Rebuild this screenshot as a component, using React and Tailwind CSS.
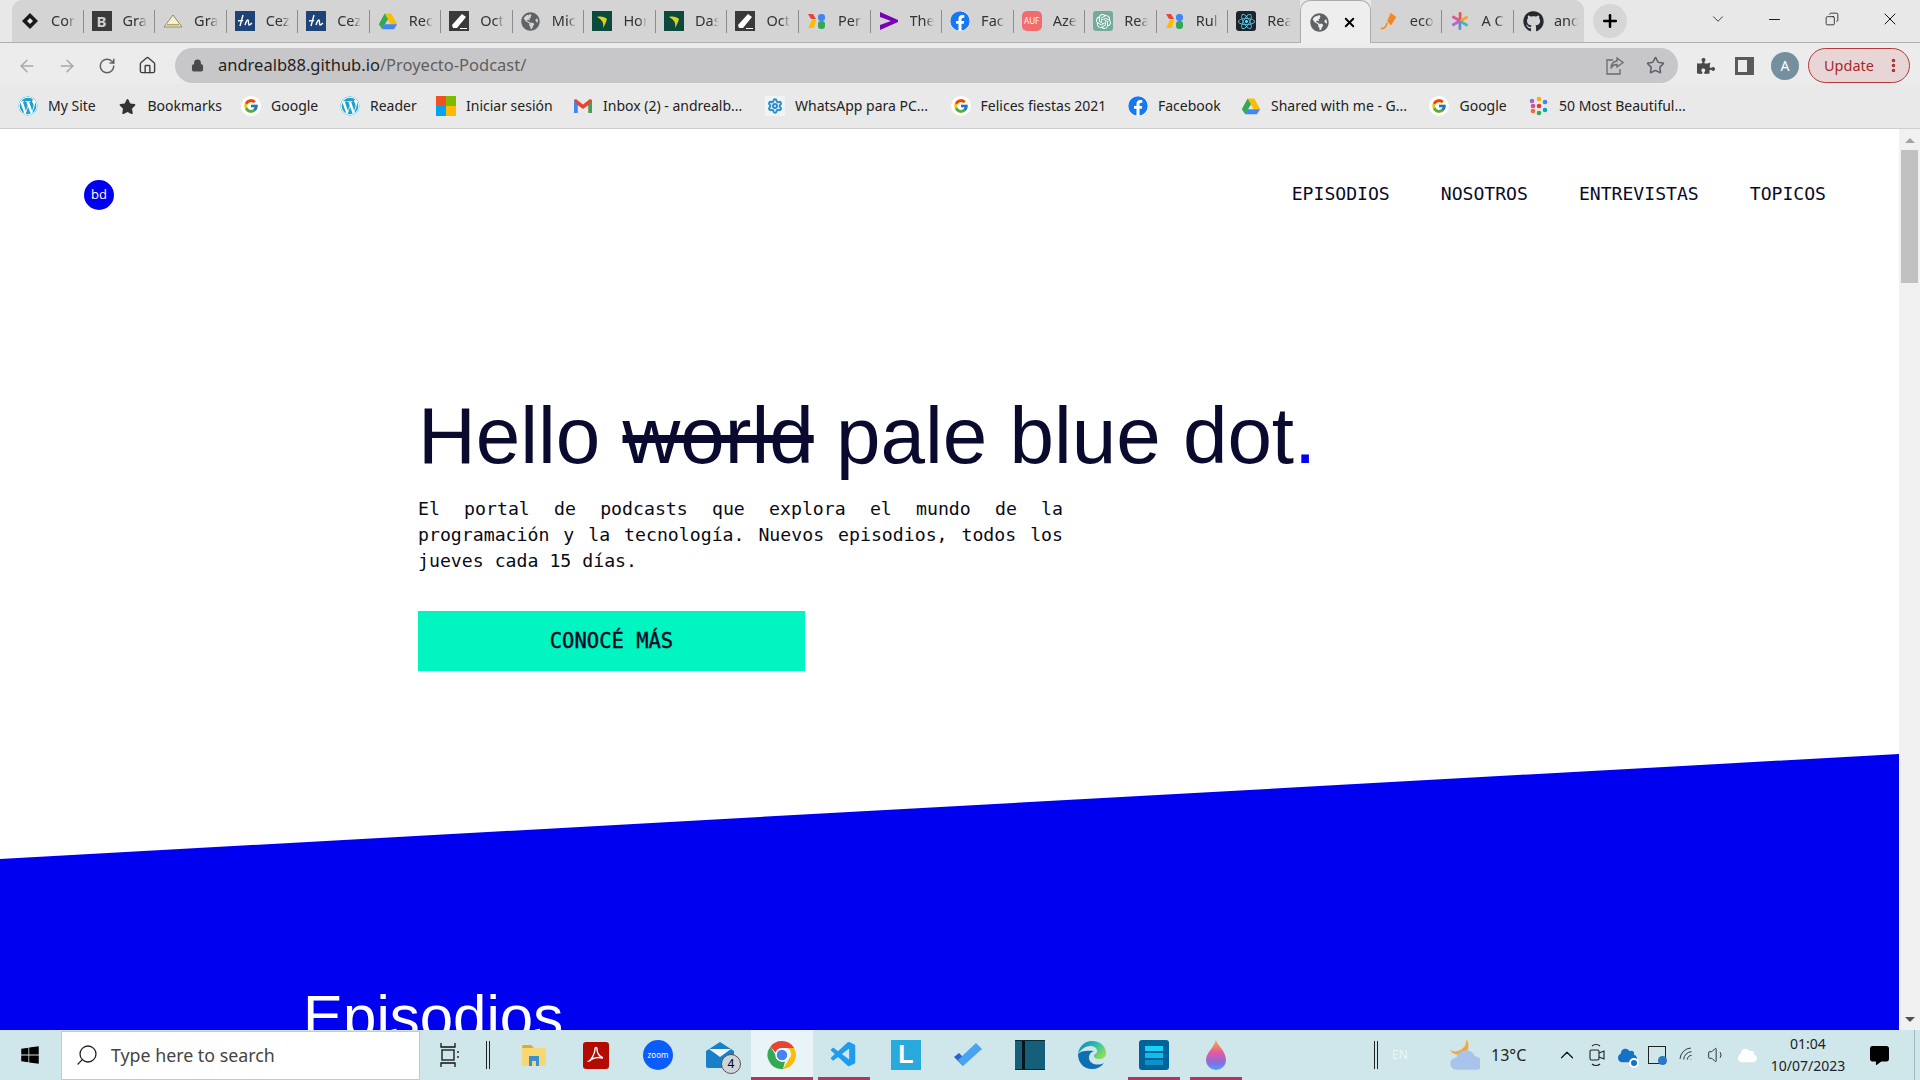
import { ArrowLeft, ArrowRight, RotateCw, Home, Lock, Star, Minus, X, Plus, ChevronDown, ChevronUp, Search, Wifi, Volume1, EllipsisVertical, Copy, Settings } from "lucide-react";
import { FaGithub, FaFacebook, FaReact, FaGlobeAmericas, FaWordpress, FaWindows, FaPuzzlePiece, FaStar, FaCloud, FaCommentAlt } from "react-icons/fa";
import { FcGoogle } from "react-icons/fc";
import { SiOpenai } from "react-icons/si";
import { VscVscode } from "react-icons/vsc";

const uiFont = "font-['Noto_Sans',sans-serif]";
const monoFont = "font-['DejaVu_Sans_Mono',monospace]";

function Drive({ size = 20 }) {
    return (
        <svg width={size} height={size} viewBox="0 0 24 24">
            <polygon points="8,3 16,3 23,16 15,16" fill="#fbbc04" />
            <polygon points="8,3 12,10 5,22 1,16" fill="#34a853" />
            <polygon points="8,16 23,16 19,22 5,22" fill="#4285f4" />
        </svg>
    );
}

function Tile({ className, children }) {
    return <div className={`flex h-5 w-5 items-center justify-center overflow-hidden ${className}`}>{children}</div>;
}

function Leaf() {
    return (
        <Tile className="bg-[#0b4a3c]">
            <svg width="16" height="16" viewBox="0 0 16 16">
                <path d="M3 4c4-1 8 0 10 2-1 3-2 6-4 9 1-4 0-8-6-11z" fill="#d9d21f" />
            </svg>
        </Tile>
    );
}

function Pencil() {
    return (
        <Tile className="bg-[#3a3a3a]">
            <svg width="20" height="20" viewBox="0 0 20 20">
                <path d="M13 3l4 3-9 11H4l-1-3z" fill="#fff" />
                <path d="M11 17h7v1h-7z" fill="#fff" />
            </svg>
        </Tile>
    );
}

function Blocks() {
    return (
        <svg width="20" height="20" viewBox="0 0 20 20">
            <polygon points="1,3 6,3 9,8 4,8" fill="#e8453c" />
            <polygon points="5,9 9,9 7,17 1,17" fill="#fbbc04" />
            <rect x="11" y="3" width="7" height="7" rx="3" fill="#4285f4" />
            <rect x="11" y="10" width="7" height="8" rx="3" fill="#34a853" />
        </svg>
    );
}

function Kite() {
    return (
        <svg width="22" height="22" viewBox="0 0 22 22">
            <path d="M13 2l6 5-6 9-4-5z" fill="#f6861f" />
            <path d="M9 13c-1 5-4 7-7 6" fill="none" stroke="#f6861f" strokeWidth="1.6" />
        </svg>
    );
}

function Asterisk() {
    const colors = ["#ef5350", "#f4a13c", "#4db6ac", "#5c8fd6", "#ab6fc9", "#e0559a"];
    return (
        <svg width="20" height="20" viewBox="0 0 20 20">
            {colors.map((c, i) => (
                <rect key={c} x="8.7" y="1" width="2.8" height="9" rx="1.2" fill={c} transform={`rotate(${i * 60} 10 10)`} />
            ))}
        </svg>
    );
}

const favicons = {
    diamond: (
        <svg width="18" height="18" viewBox="0 0 18 18">
            <path d="M9 1l8 8-8 8-8-8z" fill="#1a1a1a" />
            <path d="M9 6l3 3-3 3-3-3z" fill="#e6e6e6" />
        </svg>
    ),
    b: <Tile className={`bg-[#3a3a3a] text-[15px] font-bold text-[#d0d0d0] ${uiFont}`}>B</Tile>,
    tri: (
        <svg width="20" height="14" viewBox="0 0 20 14">
            <path d="M10 1l9 12H1z" fill="#f4efd0" stroke="#8b8b70" />
            <path d="M4 10h12v1.5H4z" fill="#b4a95c" />
        </svg>
    ),
    jn: (
        <Tile className="bg-[#1d4377]">
            <svg width="16" height="14" viewBox="0 0 16 14" fill="none" stroke="#fff" strokeWidth="1.4">
                <path d="M6 1L3 12M1 7c3-1 4-1 5 0M8 11c1-3 2-5 3-5s0 4 1 5c1 0 2-1 3-2" />
            </svg>
        </Tile>
    ),
    drive: <Drive />,
    pencil: <Pencil />,
    globe: <FaGlobeAmericas size={19} className="text-[#5f6368]" />,
    leaf: <Leaf />,
    blocks: <Blocks />,
    acc: (
        <svg width="20" height="20" viewBox="0 0 20 20">
            <path d="M1 1l18 8v2L1 19v-5l11-4L1 6z" fill="#7a00b8" />
        </svg>
    ),
    fb: <FaFacebook size={20} className="rounded-full bg-white text-[#1877f2]" />,
    auf: <div className={`flex h-5 w-5 items-center justify-center rounded-[5px] bg-[#f26b6f] text-[8px] text-white ${uiFont}`}>AUF</div>,
    openai: (
        <Tile className="rounded-[3px] bg-[#74aa9c]">
            <SiOpenai size={15} className="text-white" />
        </Tile>
    ),
    react: (
        <Tile className="rounded-[3px] bg-[#20232a]">
            <FaReact size={17} className="text-[#61dafb]" />
        </Tile>
    ),
    kite: <Kite />,
    star: <Asterisk />,
    github: <FaGithub size={21} className="text-[#24292f]" />,
};

const tabs = [
    ["diamond", "Cor"], ["b", "Gra"], ["tri", "Gra"], ["jn", "Cez"], ["jn", "Cez"], ["drive", "Rec"], ["pencil", "Oct"],
    ["globe", "Mic"], ["leaf", "Hor"], ["leaf", "Das"], ["pencil", "Oct"], ["blocks", "Per"], ["acc", "The"], ["fb", "Fac"],
    ["auf", "Aze"], ["openai", "Rea"], ["blocks", "Rul"], ["react", "Rea"],
];

function Tab({ icon, label, last, first }) {
    return (
        <div className={`relative flex h-[42px] w-[71.55px] shrink-0 items-center bg-[#d4d4d4] pl-[8px] ${first ? "rounded-tl-[10px]" : ""}`}>
            <div className="flex w-5 shrink-0 justify-center">{favicons[icon]}</div>
            <span className={`ml-[11px] w-[24px] overflow-hidden text-[14.5px] whitespace-nowrap text-[#333] [mask-image:linear-gradient(to_right,black_65%,transparent)] ${uiFont}`}>{label}</span>
            {!last && <div className="absolute top-[10px] right-0 h-[23px] w-px bg-[#8c8c8c]" />}
        </div>
    );
}

function TabStrip() {
    return (
        <div className="flex h-[43px] border-b border-[#b0b0b0] bg-[#e8e8e8] pl-[12px]">
            {tabs.map(([icon, label], i) => (
                <Tab key={i} icon={icon} label={label} first={i === 0} last={i === tabs.length - 1} />
            ))}
            <div className="z-10 flex h-[43px] w-[71px] shrink-0 items-center rounded-t-[10px] border border-b-0 border-[#ababab] bg-[#eeeeee] pl-[9px]">
                {favicons.globe}
                <X size={15} strokeWidth={3} className="ml-[13px] text-black" />
            </div>
            <Tab icon="kite" label="eco" />
            <Tab icon="star" label="A C" />
            <div className="flex h-[42px] w-[70px] shrink-0 items-center rounded-tr-[10px] bg-[#d4d4d4] pl-[9px]">
                {favicons.github}
                <span className={`ml-[10px] w-[24px] overflow-hidden text-[14.5px] whitespace-nowrap text-[#333] [mask-image:linear-gradient(to_right,black_65%,transparent)] ${uiFont}`}>and</span>
            </div>
            <div className="ml-[9px] flex h-[34px] w-[34px] shrink-0 translate-y-[4px] items-center justify-center rounded-full bg-[#d6d6d6]">
                <Plus size={20} strokeWidth={3} className="text-black" />
            </div>
            <div className="ml-[79px] flex h-[38px] w-[24px] items-center justify-center">
                <ChevronDown size={18} strokeWidth={1.25} className="text-[#333]" />
            </div>
            <div className="ml-[33px] flex h-[38px] w-[24px] items-center justify-center">
                <Minus size={17} strokeWidth={1.25} className="text-black" />
            </div>
            <div className="ml-[33px] flex h-[38px] w-[24px] items-center justify-center">
                <Copy size={14} strokeWidth={1.25} className="-scale-x-100 text-black" />
            </div>
            <div className="ml-[34px] flex h-[38px] w-[24px] items-center justify-center">
                <X size={20} strokeWidth={1.1} className="text-black" />
            </div>
        </div>
    );
}

function Toolbar() {
    return (
        <div className="flex h-[41px] items-start bg-[#ececec] pt-[5px]">
            <div className="flex h-[35px] w-[175px] shrink-0 items-center pl-[17px]">
                <ArrowLeft size={20} strokeWidth={1.75} className="text-[#a8a8a8]" />
                <ArrowRight size={20} strokeWidth={1.75} className="ml-[20px] text-[#a8a8a8]" />
                <RotateCw size={18} strokeWidth={2} className="ml-[21px] text-[#5f6368]" />
                <Home size={19} strokeWidth={1.75} className="ml-[22px] text-[#3c4043]" />
            </div>
            <div className="flex h-[35px] w-[1503px] shrink-0 items-center rounded-full bg-[#c7c7c9] pl-[16px]">
                <Lock size={13} strokeWidth={2.5} className="fill-[#4a4a4a] text-[#4a4a4a]" />
                <span className={`ml-[14px] text-[16.5px] leading-none whitespace-nowrap ${uiFont}`}>
                    <span className="text-[#1f1f1f]">andrealb88.github.io</span>
                    <span className="text-[#5f5f5f]">/Proyecto-Podcast/</span>
                </span>
                <svg width="20" height="20" viewBox="0 0 20 20" fill="none" stroke="#6b6b6b" strokeWidth="1.3" className="ml-auto">
                    <path d="M8 4H2v14h13v-5" />
                    <path d="M12 2l6 4.500-6 4.500V8.500c-3 0-5 1-6 4 0-4 2-7 6-7.500z" />
                </svg>
                <Star size={19} strokeWidth={2} className="mr-[13px] ml-[21px] text-[#5f6368]" />
            </div>
            <div className="flex h-[35px] flex-1 items-center pl-[19px]">
                <FaPuzzlePiece size={18} className="text-[#4a4a4a]" />
                <div className="ml-[20px] h-[18px] w-[19px] border-[3px] border-r-[7px] border-[#5a5a5a] bg-[#ececec]" />
                <div className={`ml-[17px] flex h-[28px] w-[28px] items-center justify-center rounded-full bg-[#74909f] text-[14px] text-white ${uiFont}`}>A</div>
                <div className={`ml-[9px] flex h-[35px] w-[102px] items-center rounded-full border border-[#b23a3a] bg-[#e8d6d6] pl-[15px] text-[14.5px] text-[#a52a2a] ${uiFont}`}>
                    Update
                    <EllipsisVertical size={17} strokeWidth={3} className="ml-[11px] text-[#a52a2a]" />
                </div>
            </div>
        </div>
    );
}

function GoogleG() {
    return (
        <div className="flex h-5 w-5 items-center justify-center rounded-full bg-white">
            <FcGoogle size={16} />
        </div>
    );
}

function Dots() {
    const dots = [
        ["#e24a8b", 4, 10], ["#f4b400", 10, 3], ["#4285f4", 16, 6], ["#e53935", 10, 10],
        ["#8e6fd1", 3, 5], ["#34a853", 10, 17], ["#f26b3a", 4, 15], ["#00acc1", 16, 14],
    ];
    return (
        <svg width="20" height="20" viewBox="0 0 20 20">
            {dots.map(([c, x, y]) => (
                <circle key={c} cx={x} cy={y} r="2.3" fill={c} />
            ))}
        </svg>
    );
}

const bookmarks = [
    [<FaWordpress size={20} className="rounded-full bg-white text-[#21a0cc]" />, "My Site", 99.5],
    [<FaStar size={17} className="text-[#333]" />, "Bookmarks", 123.5],
    [<GoogleG />, "Google", 99],
    [<FaWordpress size={20} className="rounded-full bg-white text-[#21a0cc]" />, "Reader", 96],
    [
        <div className="grid h-5 w-5 grid-cols-2 grid-rows-2">
            <div className="bg-[#f25022]" />
            <div className="bg-[#7fba00]" />
            <div className="bg-[#00a4ef]" />
            <div className="bg-[#ffb900]" />
        </div>,
        "Iniciar sesión",
        137,
    ],
    [
        <svg width="20" height="16" viewBox="0 0 20 16">
            <path d="M1 2v13h3.5V7L10 11l5.500-4v8H19V2l-2-1-7 5.500L3 1z" fill="#ea4335" />
            <path d="M1 2v13h3.5V7z" fill="#4285f4" />
            <path d="M19 2v13h-3.5V7z" fill="#34a853" />
        </svg>,
        "Inbox (2) - andrealb...",
        192,
    ],
    [
        <div className="flex h-5 w-5 items-center justify-center bg-[#f0f4f8]">
            <Settings size={16} strokeWidth={3} className="text-[#2a8fc7]" />
        </div>,
        "WhatsApp para PC...",
        185.6,
    ],
    [<GoogleG />, "Felices fiestas 2021", 177.4],
    [<FaFacebook size={20} className="rounded-full bg-white text-[#1877f2]" />, "Facebook", 113],
    [<Drive />, "Shared with me - G...", 188.5],
    [<GoogleG />, "Google", 99.5],
    [<Dots />, "50 Most Beautiful...", 170],
];

function Bookmarks() {
    return (
        <div className="flex h-[45px] items-center border-b border-[#cfcfcf] bg-[#e9e9e9] pl-[18px]">
            {bookmarks.map(([icon, label, width]) => (
                <div key={label + width} className="flex shrink-0 items-center" style={{ width }}>
                    <div className="flex w-5 shrink-0 justify-center">{icon}</div>
                    <span className={`mb-[2px] ml-[10px] text-[14px] whitespace-nowrap text-[#222] ${uiFont}`}>{label}</span>
                </div>
            ))}
        </div>
    );
}

function Scrollbar() {
    return (
        <div className="flex h-full w-[21px] shrink-0 flex-col items-center bg-[#f1f1f1] pt-[9px]">
            <div className="h-0 w-0 border-x-[5px] border-b-[5px] border-x-transparent border-b-[#a3a3a3]" />
            <div className="mt-[7px] h-[133px] w-[17px] bg-[#c1c1c1]" />
            <div className="mt-auto mb-[8px] h-0 w-0 border-x-[5px] border-t-[5px] border-x-transparent border-t-[#505050]" />
        </div>
    );
}

function Page() {
    return (
        <div className="flex h-[901px] overflow-hidden bg-white">
            <main className="w-[1899px] shrink-0">
                <header className={`flex h-[132px] items-center justify-between pr-[73px] pl-[84px] ${monoFont}`}>
                    <div className="flex h-[30px] w-[30px] items-center justify-center rounded-full bg-[#0000f0] font-['Open_Sans',sans-serif] text-[13px] text-white">bd</div>
                    <nav className="mb-[2px] flex gap-[51px] text-[18.1px] text-[#0a0a28]">
                        <a>EPISODIOS</a>
                        <a>NOSOTROS</a>
                        <a>ENTREVISTAS</a>
                        <a>TOPICOS</a>
                    </nav>
                </header>
                <section className="pt-[135px] pl-[418px]">
                    <h1 className="font-['Liberation_Sans',sans-serif] text-[80px] leading-[80px] whitespace-nowrap text-[#0a0a2e]">
                        Hello <span className="line-through">world</span> pale blue dot<span className="text-[#0000f0]">.</span>
                    </h1>
                    <p className={`mt-[20px] w-[645px] text-justify text-[18.2px] leading-[26px] text-[#0a0a14] ${monoFont}`}>
                        El portal de podcasts que explora el mundo de la programación y la tecnología. Nuevos episodios, todos los jueves cada 15 días.
                    </p>
                    <button className={`mt-[37px] flex h-[60px] w-[387px] items-center justify-center bg-[#00f5c0] pt-[1px] text-[20.5px] text-[#0a0a28] [-webkit-text-stroke:0.4px_#0a0a28] ${monoFont}`}>
                        CONOCÉ MÁS
                    </button>
                </section>
                <section className="mt-[83px] h-[400px] bg-[#0000f0] pt-[233px] pl-[303px] [clip-path:polygon(0_105px,100%_0,100%_100%,0_100%)]">
                    <h2 className="font-['Liberation_Sans',sans-serif] text-[60px] leading-[60px] text-white">Episodios</h2>
                </section>
            </main>
            <Scrollbar />
        </div>
    );
}

function Chrome() {
    return (
        <svg width="30" height="30" viewBox="0 0 30 30">
            <path d="M15 1a14 14 0 0 1 12.100 7H15a7 7 0 0 0-6.500 4.400L3.500 6.500A14 14 0 0 1 15 1z" fill="#ea4335" />
            <path d="M27.100 8A14 14 0 0 1 16 29l6-10a7 7 0 0 0-1-11z" fill="#fbbc04" />
            <path d="M3.500 6.500l6 10a7 7 0 0 0 8.500 5L16 29A14 14 0 0 1 3.500 6.500z" fill="#34a853" />
            <circle cx="15" cy="15" r="6" fill="#4285f4" stroke="#fff" strokeWidth="1.4" />
        </svg>
    );
}

const taskIcons = [
    {
        icon: (
            <svg width="26" height="24" viewBox="0 0 26 24">
                <path d="M1 4a2 2 0 0 1 2-2h7l3 3h10a2 2 0 0 1 2 2v14a2 2 0 0 1-2 2H3a2 2 0 0 1-2-2z" fill="#f7d774" />
                <path d="M1 4a2 2 0 0 1 2-2h7l3 3H1z" fill="#e0a830" />
                <path d="M8 13h10v10h-3v-5h-4v5H8z" fill="#3a8fd0" />
            </svg>
        ),
    },
    {
        icon: (
            <div className="flex h-[27px] w-[26px] items-center justify-center rounded-[3px] bg-[#b30b00]">
                <svg width="18" height="18" viewBox="0 0 18 18">
                    <path d="M2 15c3-2 6-8 6-12 0-2 2-2 2 0 0 4 2 7 6 9-4-1-9 0-11 1-1 1-2 2-3 2z" fill="none" stroke="#fff" strokeWidth="1.4" />
                </svg>
            </div>
        ),
    },
    {
        icon: <div className={`flex h-[30px] w-[30px] items-center justify-center rounded-full bg-[#0b5cff] text-[8px] text-white ${uiFont}`}>zoom</div>,
    },
    {
        icon: (
            <div className="relative h-[30px] w-[30px]">
                <svg width="30" height="30" viewBox="0 0 30 30">
                    <path d="M1 11l14-9 14 9v15a2 2 0 0 1-2 2H3a2 2 0 0 1-2-2z" fill="#1a7fc9" />
                    <path d="M4 9h22l-11 8z" fill="#eef6fb" />
                </svg>
                <div className={`absolute -right-[6px] -bottom-[4px] flex h-[20px] w-[20px] items-center justify-center rounded-full border border-[#555] bg-[#cfd6d9] text-[12px] text-black ${uiFont}`}>4</div>
            </div>
        ),
    },
    { icon: <Chrome />, active: true, line: true },
    { icon: <VscVscode size={30} className="text-[#1f9cf0]" />, line: true, narrow: true },
    {
        icon: (
            <div className="flex h-[30px] w-[30px] items-center justify-center bg-[#28aadc] font-['Liberation_Sans',sans-serif] text-[25px] font-bold text-white">L</div>
        ),
    },
    {
        icon: (
            <svg width="30" height="26" viewBox="0 0 30 26">
                <path d="M10 24L1 15l5-4 4 4z" fill="#2564cf" />
                <path d="M10 24L5 18 23 1l6 6z" fill="#4aa3ef" />
            </svg>
        ),
    },
    {
        icon: (
            <div className="flex h-[30px] w-[30px] border-y border-[#0a2a36] bg-[#14607a] pl-[7px]">
                <div className="h-full w-[3px] bg-[#04141c]" />
            </div>
        ),
    },
    {
        icon: (
            <svg width="30" height="30" viewBox="0 0 30 30">
                <defs>
                    <linearGradient id="edge" x1="0" y1="0" x2="1" y2="0.6">
                        <stop offset="0" stopColor="#0c7cc4" />
                        <stop offset="0.6" stopColor="#30c3a8" />
                        <stop offset="1" stopColor="#8bdc5a" />
                    </linearGradient>
                </defs>
                <path d="M15 1c8 0 14 5 14 12 0 4-3 6-7 6-3 0-5-1-5-3 0-3 4-2 3-6-1-3-4-4-6-4C7 6 3 11 1 14 2 7 7 1 15 1z" fill="url(#edge)" />
                <path d="M1 14c0 9 6 15 14 15 5 0 9-2 12-6-4 2-9 2-12 0-3-2-4-6-2-9 1-2 4-3 4-3-8-1-14 0-16 3z" fill="#0f6fb5" />
            </svg>
        ),
    },
    {
        icon: (
            <div className="flex h-[30px] w-[30px] flex-col items-center justify-center gap-[2px] rounded-[3px] bg-[#00639c]">
                <div className="h-[5px] w-[18px] bg-[#19d0f5]" />
                <div className="h-[5px] w-[18px] bg-[#10bdea]" />
                <div className="h-[5px] w-[18px] bg-[#0a93c8]" />
            </div>
        ),
        line: true,
        narrow: true,
    },
    {
        icon: (
            <svg width="24" height="32" viewBox="0 0 24 32">
                <defs>
                    <linearGradient id="fluent" x1="0" y1="0" x2="0" y2="1">
                        <stop offset="0" stopColor="#f9b233" />
                        <stop offset="0.4" stopColor="#e95a9b" />
                        <stop offset="0.75" stopColor="#8a6be0" />
                        <stop offset="1" stopColor="#3fa9f5" />
                    </linearGradient>
                </defs>
                <path d="M12 1c1 5 10 11 10 20a10 10 0 0 1-20 0C2 14 9 10 12 1z" fill="url(#fluent)" />
            </svg>
        ),
        line: true,
        narrow: true,
    },
];

function TaskSlot({ item }) {
    return (
        <div className={`relative flex h-[50px] w-[62px] shrink-0 items-center justify-center ${item.active ? "bg-[#e9f4f6]" : ""}`}>
            {item.icon}
            {item.line && <div className={`absolute bottom-0 h-[3px] bg-[#b83260] ${item.narrow ? "left-[5px] w-[52px]" : "left-0 w-[62px]"}`} />}
        </div>
    );
}

function TraySlot({ children }) {
    return <div className="flex h-[50px] w-[30px] shrink-0 items-center justify-center">{children}</div>;
}

function Taskbar() {
    return (
        <div className={`flex h-[50px] items-center bg-[#cfe7eb] text-[#222] ${uiFont}`}>
            <div className="flex h-[50px] w-[61px] shrink-0 items-center justify-center pr-[2px]">
                <FaWindows size={20} className="text-black" />
            </div>
            <div className="flex h-[49px] w-[359px] shrink-0 items-center border border-[#c8c8c8] bg-white pl-[13px]">
                <Search size={24} strokeWidth={1.3} className="-scale-x-100 text-[#222]" />
                <span className="ml-[12px] text-[17.8px] text-[#444]">Type here to search</span>
            </div>
            <div className="flex w-[59px] shrink-0 justify-center">
                <svg width="20" height="26" viewBox="0 0 20 26" fill="none" stroke="#111" strokeWidth="1.3">
                    <path d="M1 1v4h14V1M1 25v-4h14v4" />
                    <rect x="2" y="8" width="12" height="10" />
                    <path d="M18 9v2M18 14v2" />
                </svg>
            </div>
            <div className="mr-[6px] flex w-[18px] shrink-0 justify-center">
                <div className="h-[28px] w-[4px] border-x border-[#222]" />
            </div>
            {taskIcons.map((item, i) => (
                <TaskSlot key={i} item={item} />
            ))}
            <div className="ml-auto flex h-[50px] w-[559px] shrink-0 items-center">
                <TraySlot>
                    <div className="h-[28px] w-[4px] border-x border-[#222]" />
                </TraySlot>
                <div className="flex w-[18px] shrink-0 justify-center text-[12px] text-[#e8f6f8]">EN</div>
                <div className="ml-[41px] flex w-[30px] shrink-0 justify-center">
                    <svg width="32" height="32" viewBox="2 2 24 26">
                        <path d="M15 2a9 9 0 0 1-13 9c2 4 8 5 12 3 3-2 4-8 1-12z" fill="#f4a83a" />
                        <path d="M7 27a5 5 0 0 1 0-10 8 8 0 0 1 15-1 6 6 0 0 1 3 11z" fill="#a9c4ea" />
                    </svg>
                </div>
                <span className="w-[60px] shrink-0 pl-[11px] text-[16px] whitespace-nowrap">13°C</span>
                <div className="ml-[12px] flex">
                    <TraySlot>
                        <ChevronUp size={22} strokeWidth={1.3} className="text-[#111]" />
                    </TraySlot>
                    <TraySlot>
                        <svg width="16" height="24" viewBox="0 0 16 24" fill="none" stroke="#222" strokeWidth="1.1">
                            <rect x="1" y="7" width="9" height="10" rx="1.500" />
                            <path d="M10 10l5-2v8l-5-2M3 3c2-2 6-2 8 0M3 21c2 2 6 2 8 0" />
                        </svg>
                    </TraySlot>
                    <TraySlot>
                        <div className="relative">
                            <FaCloud size={19} className="text-[#1672c4]" />
                            <div className="absolute -right-[2px] -bottom-[3px] h-[10px] w-[10px] rounded-full border-2 border-white bg-[#1672c4]" />
                        </div>
                    </TraySlot>
                    <TraySlot>
                        <div className="relative h-[18px] w-[18px] border border-[#222]">
                            <div className="absolute -right-[2px] -bottom-[2px] h-[9px] w-[9px] rounded-full bg-[#2b78c5]" />
                        </div>
                    </TraySlot>
                    <TraySlot>
                        <Wifi size={18} strokeWidth={1.1} className="rotate-[-45deg] text-[#222]" />
                    </TraySlot>
                    <TraySlot>
                        <Volume1 size={20} strokeWidth={1.1} className="text-[#222]" />
                    </TraySlot>
                    <TraySlot>
                        <FaCloud size={19} className="text-white" />
                    </TraySlot>
                </div>
                <div className="flex w-[92px] shrink-0 flex-col items-center text-[14px] leading-[22px]">
                    <span>01:04</span>
                    <span>10/07/2023</span>
                </div>
                <div className="flex w-[50px] shrink-0 justify-center">
                    <FaCommentAlt size={19} className="text-black" />
                </div>
                <div className="ml-auto h-[50px] w-[6px] border-l border-[#9fb8bd]" />
            </div>
        </div>
    );
}

export default function App() {
    return (
        <div className="h-[1080px] w-[1920px] overflow-hidden">
            <TabStrip />
            <Toolbar />
            <Bookmarks />
            <Page />
            <Taskbar />
        </div>
    );
}
